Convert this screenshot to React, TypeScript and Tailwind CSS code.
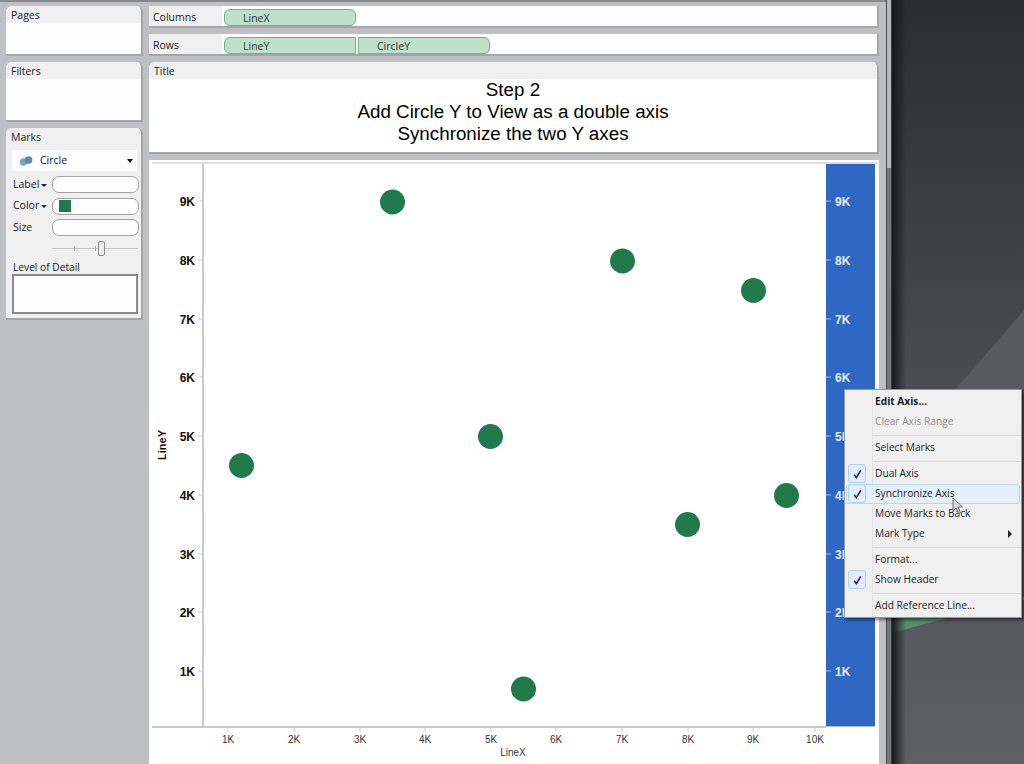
const points = [
  [392.5, 202],
  [622.5, 261],
  [753.5, 290.5],
  [490.5, 436.5],
  [241.5, 465.5],
  [786.5, 495.5],
  [687.5, 524.5],
  [523.5, 689],
];
const yTicks = [
  ["9K", 201],
  ["8K", 260],
  ["7K", 319],
  ["6K", 377],
  ["5K", 436],
  ["4K", 495],
  ["3K", 554],
  ["2K", 612],
  ["1K", 671],
] as const;
const xTicks = [
  ["1K", 228],
  ["2K", 294],
  ["3K", 360],
  ["4K", 425],
  ["5K", 491],
  ["6K", 556],
  ["7K", 622],
  ["8K", 688],
  ["9K", 753],
  ["10K", 815],
] as const;

function PanelHeader({ title }: { title: string }) {
  return <div className="h-[17px] shrink-0 bg-[#f0f0f0] pl-[5px] text-[10.5px] leading-[18px] text-[#222]">{title}</div>;
}

function SidePanel({ title, height }: { title: string; height: string }) {
  return (
    <div className={`${height} flex shrink-0 flex-col overflow-hidden rounded-t-[6px] border-r-2 border-b-2 border-[#a6a6a8] bg-[#fdfdfd]`}>
      <PanelHeader title={title} />
    </div>
  );
}

function Shelf({ label, children }: { label: string; children: React.ReactNode }) {
  return (
    <div className="flex h-[22px] shrink-0 border-r-2 border-b-2 border-[#a6a6a8] bg-[#fdfdfd]">
      <div className="w-[73px] shrink-0 bg-[#f0f0f0] pl-[4px] text-[10.5px] leading-[22px] text-[#222]">{label}</div>
      <div className="flex gap-[2px] pt-[3px] pl-[2px]">{children}</div>
    </div>
  );
}

function Pill({ label, rounded }: { label: string; rounded: string }) {
  return (
    <div className={`h-[17px] w-[132px] border border-[#66b592] bg-[#bfe0cb] pl-[18px] text-[10.5px] leading-[17px] text-[#2b3a33] ${rounded}`}>
      {label}
    </div>
  );
}

function MarkRow({ label, arrow, children }: { label: string; arrow?: boolean; children?: React.ReactNode }) {
  return (
    <div className="flex h-[17px] items-center pl-[7px]">
      <div className="flex w-[39px] shrink-0 items-center gap-[2px] text-[10.5px] text-[#222]">
        {label}
        {arrow && <span className="mt-[1px] h-0 w-0 border-x-[3px] border-t-[3px] border-x-transparent border-t-[#222]" />}
      </div>
      <div className="flex h-[17px] w-[87px] items-center rounded-[7px] border-[1.5px] border-[#a3a3a3] bg-[#fdfdfd] pl-[6px]">{children}</div>
    </div>
  );
}

function MenuItem({
  label,
  bold,
  disabled,
  checked,
  active,
  submenu,
}: {
  label: string;
  bold?: boolean;
  disabled?: boolean;
  checked?: boolean;
  active?: boolean;
  submenu?: boolean;
}) {
  return (
    <div
      className={`relative flex h-[20px] items-center pr-[8px] pl-[30px] text-[10.2px] ${bold ? "font-bold" : ""} ${
        disabled ? "text-[#8e8e8e]" : "text-[#1c1c1c]"
      }`}
    >
      {active && <div className="absolute inset-x-[1px] inset-y-0 rounded-[3px] border border-[#b8d6f3] bg-[#e6f0fa]" />}
      {checked && (
        <div className="absolute top-0 left-[3px] flex h-[19px] w-[18px] items-center justify-center rounded-[3px] border border-[#aecff7] bg-[#e4eefb]">
          <svg width="9" height="10" viewBox="0 0 11 12">
            <path d="M1.5 7 L4 10.5 L9.5 1.5" fill="none" stroke="#1a1a9c" strokeWidth="1.9" />
          </svg>
        </div>
      )}
      <span className="relative">{label}</span>
      {submenu && <span className="absolute right-[9px] h-0 w-0 border-y-[4px] border-l-[4px] border-y-transparent border-l-[#222]" />}
    </div>
  );
}

function MenuSep() {
  return <div className="mt-[2.5px] mb-[2.5px] ml-[28px] h-px bg-[#d9d9d9]" />;
}

export default function App() {
  return (
    <div className="relative flex h-[764px] w-[1024px] overflow-hidden font-['Open_Sans',sans-serif]">
      {/* app window */}
      <div className="flex w-[886px] shrink-0 gap-[6px] border-t-2 border-[#8a8a8c] bg-[#bfc0c3] pt-[4px] pl-[6px]">
        <div className="flex w-[137px] shrink-0 flex-col gap-[6px]">
          <SidePanel title="Pages" height="h-[50px]" />
          <SidePanel title="Filters" height="h-[60px]" />
          <div className="flex h-[192px] shrink-0 flex-col overflow-hidden rounded-t-[6px] border-r-2 border-b-2 border-[#a6a6a8] bg-[#f0f0f0]">
            <PanelHeader title="Marks" />
            <div className="mx-[6px] mt-[5px] flex h-[21px] w-[125px] items-center bg-[#fdfdfd] pr-[4px] pl-[7px] text-[10.5px] text-[#222]">
              <svg width="14" height="10" viewBox="0 0 14 10" className="mr-[7px] shrink-0">
                <circle cx="4.5" cy="6" r="3.8" fill="#7fa3c4" />
                <circle cx="9.5" cy="4" r="3.8" fill="#5a88b0" />
              </svg>
              Circle
              <span className="ml-auto h-0 w-0 border-x-[3.5px] border-t-[4px] border-x-transparent border-t-[#111]" />
            </div>
            <div className="mt-[5px] flex flex-col gap-[4.5px]">
              <MarkRow label="Label" arrow />
              <MarkRow label="Color" arrow>
                <div className="h-[12px] w-[12px] bg-[#217a4b]" />
              </MarkRow>
              <MarkRow label="Size" />
            </div>
            <div className="relative mt-[5px] ml-[46px] h-[16px] w-[86px]">
              <div className="absolute top-[7px] h-px w-full bg-[#c4c4c4]" />
              <div className="absolute top-[5px] left-[22px] h-[5px] w-px bg-[#b0b0b0]" />
              <div className="absolute top-[5px] left-[43px] h-[5px] w-px bg-[#b0b0b0]" />
              <div className="absolute top-0 left-[46px] h-[15px] w-[7px] rounded-[2px] border border-[#8f8f8f] bg-[#ececec]" />
            </div>
            <div className="mt-[3px] pl-[7px] text-[10.2px] leading-[15px] text-[#222]">Level of Detail</div>
            <div className="mx-[6px] -mt-[1px] h-[40px] w-[126px] border-2 border-[#8a8a8a] bg-[#fdfdfd]" />
          </div>
        </div>

        <div className="flex w-[730px] shrink-0 flex-col gap-[6px]">
          <Shelf label="Columns">
            <Pill label="LineX" rounded="rounded-[6px]" />
          </Shelf>
          <Shelf label="Rows">
            <Pill label="LineY" rounded="rounded-l-[6px]" />
            <Pill label="CircleY" rounded="rounded-r-[6px]" />
          </Shelf>
          <div className="flex h-[92px] shrink-0 flex-col overflow-hidden rounded-t-[6px] border-r-2 border-b-[2px] border-[#a6a6a8] bg-white">
            <PanelHeader title="Title" />
            <div className="text-center font-['Liberation_Sans',sans-serif] text-[18.8px] leading-[22px] text-black">
              <div>Step 2</div>
              <div>Add Circle Y to View as a double axis</div>
              <div>Synchronize the two Y axes</div>
            </div>
          </div>
          <div className="h-[604px] shrink-0 bg-white">
            <svg width="730" height="604" viewBox="149 160 730 604" className="block font-['Liberation_Sans',sans-serif]">
              <line x1="152" x2="878" y1="163" y2="163" stroke="#d2d2d2" strokeWidth="1.5" />
              <rect x="826" y="164" width="49" height="562" fill="#2f68c4" />
              <line x1="203" x2="203" y1="164" y2="727" stroke="#c9c9c9" strokeWidth="2" />
              <line x1="152" x2="826" y1="727" y2="727" stroke="#c9c9c9" strokeWidth="2" />
              <line x1="826" x2="875" y1="726.5" y2="726.5" stroke="#b0b6c2" />
              {yTicks.map(([label, y]) => (
                <g key={label}>
                  <line x1="198" x2="203" y1={y} y2={y} stroke="#c9c9c9" />
                  <text x="195" y={y + 4.5} textAnchor="end" fontSize="12" fontWeight="700" fill="#111">
                    {label}
                  </text>
                  <line x1="826" x2="831" y1={y} y2={y} stroke="#9db9e6" />
                  <text x="835" y={y + 4.5} fontSize="12" fontWeight="700" fill="#e4ecfa">
                    {label}
                  </text>
                </g>
              ))}
              {xTicks.map(([label, x]) => (
                <g key={label}>
                  <line x1={x} x2={x} y1="727" y2="732" stroke="#c9c9c9" />
                  <text x={x} y="743" textAnchor="middle" fontSize="10" fill="#333">
                    {label}
                  </text>
                </g>
              ))}
              <text x="513" y="756" textAnchor="middle" fontSize="10" fill="#333">
                LineX
              </text>
              <text transform="translate(166 445) rotate(-90)" textAnchor="middle" fontSize="11" fontWeight="700" fill="#111">
                LineY
              </text>
              {points.map(([cx, cy]) => (
                <circle key={cx} cx={cx} cy={cy} r="12.5" fill="#217a4b" />
              ))}
            </svg>
          </div>
        </div>
      </div>

      {/* splitter */}
      <div className="w-px shrink-0 bg-[#4a4a4c]" />
      <div className="w-[4px] shrink-0 bg-gradient-to-b from-[#b9babd] from-[22%] to-[#77787b] to-[22%]" />
      <div className="w-px shrink-0 bg-[#3a3a3c]" />

      {/* desktop behind the window */}
      <div className="relative flex-1 overflow-hidden bg-gradient-to-b from-[#2c2d32] via-[#4a4c50] to-[#5f6066]">
        <svg width="132" height="764" viewBox="892 0 132 764" className="absolute inset-0">
          <polygon points="955,390 1024,310 1024,390" fill="#575a5f" />
          <polygon points="892,600 1024,600 1024,597 892,633" fill="#5a8a6c" />
        </svg>
        <div className="absolute inset-y-0 left-0 w-[14px] bg-gradient-to-r from-[#17181a] to-transparent" />
      </div>

      {/* context menu */}
      <div className="absolute top-[389px] left-[844px] h-[229px] w-[178px] border border-[#979797] bg-[#f0f0f0] pt-[2px] shadow-[2px_2px_3px_rgba(0,0,0,0.5)]">
        <div className="absolute inset-y-0 left-[27px] w-px bg-[#e2e2e2]" />
        <MenuItem label="Edit Axis..." bold />
        <MenuItem label="Clear Axis Range" disabled />
        <MenuSep />
        <MenuItem label="Select Marks" />
        <MenuSep />
        <MenuItem label="Dual Axis" checked />
        <MenuItem label="Synchronize Axis" checked active />
        <MenuItem label="Move Marks to Back" />
        <MenuItem label="Mark Type" submenu />
        <MenuSep />
        <MenuItem label="Format..." />
        <MenuItem label="Show Header" checked />
        <MenuSep />
        <MenuItem label="Add Reference Line..." />
        <svg width="12" height="18" viewBox="0 0 12 18" className="absolute top-[107px] left-[107px]">
          <path d="M1 1v13l3-3 2.5 5.5 2-1L6 10h4.5z" fill="#d8dbe0" stroke="#6b7078" strokeWidth="1" />
        </svg>
      </div>
    </div>
  );
}
